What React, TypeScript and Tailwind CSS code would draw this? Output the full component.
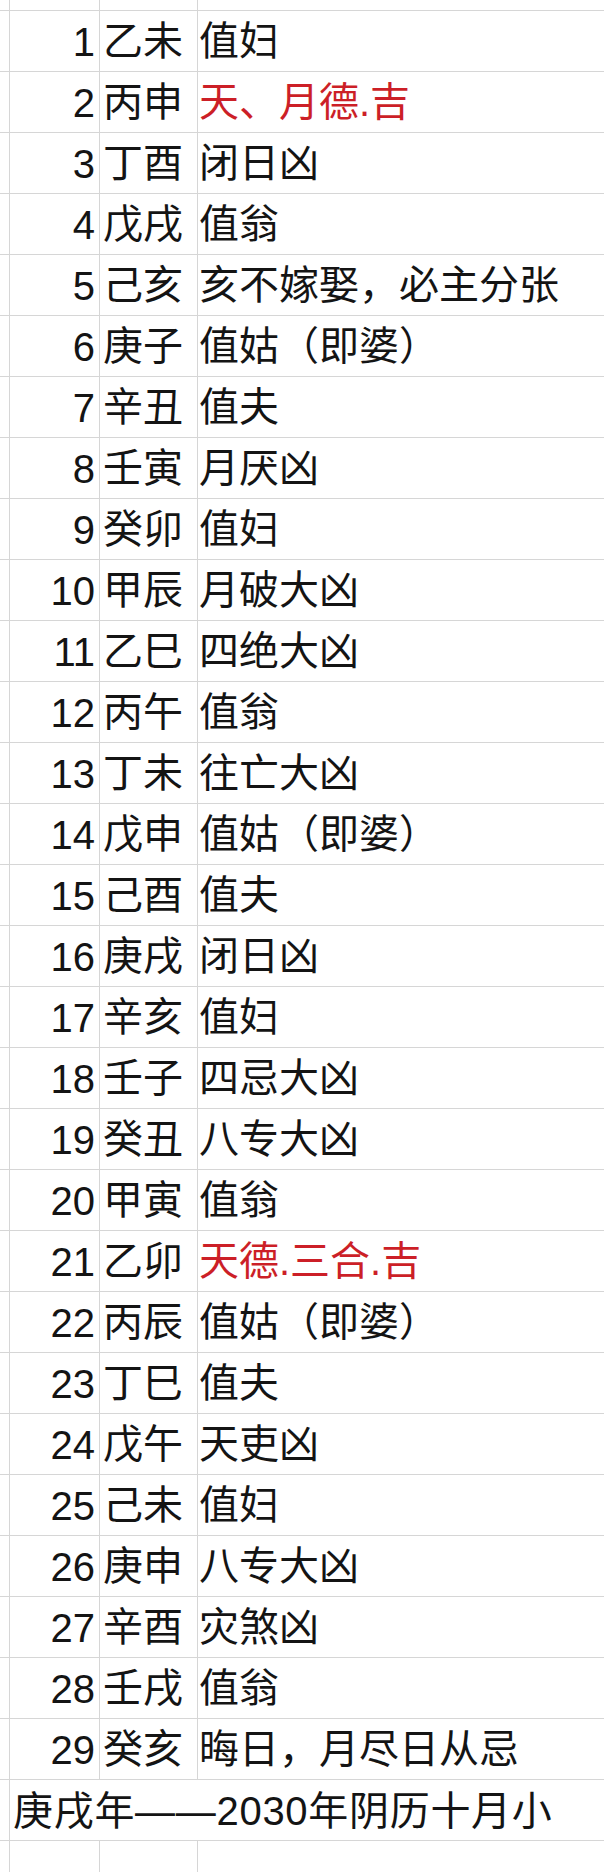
// 2030 庚戌年 阴历十月 — 日期表格

const ROWS: { n: number; gz: string; note: string; red?: boolean }[] = [
  { n: 1, gz: "乙未", note: "值妇" },
  { n: 2, gz: "丙申", note: "天、月德.吉", red: true },
  { n: 3, gz: "丁酉", note: "闭日凶" },
  { n: 4, gz: "戊戌", note: "值翁" },
  { n: 5, gz: "己亥", note: "亥不嫁娶，必主分张" },
  { n: 6, gz: "庚子", note: "值姑（即婆）" },
  { n: 7, gz: "辛丑", note: "值夫" },
  { n: 8, gz: "壬寅", note: "月厌凶" },
  { n: 9, gz: "癸卯", note: "值妇" },
  { n: 10, gz: "甲辰", note: "月破大凶" },
  { n: 11, gz: "乙巳", note: "四绝大凶" },
  { n: 12, gz: "丙午", note: "值翁" },
  { n: 13, gz: "丁未", note: "往亡大凶" },
  { n: 14, gz: "戊申", note: "值姑（即婆）" },
  { n: 15, gz: "己酉", note: "值夫" },
  { n: 16, gz: "庚戌", note: "闭日凶" },
  { n: 17, gz: "辛亥", note: "值妇" },
  { n: 18, gz: "壬子", note: "四忌大凶" },
  { n: 19, gz: "癸丑", note: "八专大凶" },
  { n: 20, gz: "甲寅", note: "值翁" },
  { n: 21, gz: "乙卯", note: "天德.三合.吉", red: true },
  { n: 22, gz: "丙辰", note: "值姑（即婆）" },
  { n: 23, gz: "丁巳", note: "值夫" },
  { n: 24, gz: "戊午", note: "天吏凶" },
  { n: 25, gz: "己未", note: "值妇" },
  { n: 26, gz: "庚申", note: "八专大凶" },
  { n: 27, gz: "辛酉", note: "灾煞凶" },
  { n: 28, gz: "壬戌", note: "值翁" },
  { n: 29, gz: "癸亥", note: "晦日，月尽日从忌" },
];

const line = "border-[#d6d6d6]";

function EmptyRow({ h }: { h: string }) {
  return (
    <div className={`flex ${h} border-b ${line}`}>
      <div className={`w-[10px] shrink-0 border-r ${line}`} />
      <div className={`w-[90px] shrink-0 border-r ${line}`} />
      <div className={`w-[98px] shrink-0 border-r ${line}`} />
      <div className="flex-1" />
    </div>
  );
}

export default function App() {
  return (
    <div
      className="w-[604px] h-[1872px] overflow-hidden bg-white text-[#141414] text-[40px] leading-none"
      style={{ fontFamily: '"Liberation Sans", "Noto Sans CJK SC", sans-serif' }}
    >
      <EmptyRow h="h-[11px]" />
      {ROWS.map((r) => (
        <div key={r.n} className={`flex h-[61px] border-b ${line}`}>
          <div className={`w-[10px] shrink-0 border-r ${line}`} />
          <div className={`w-[90px] shrink-0 border-r ${line} flex items-center justify-end pr-[4px] pt-[2px]`}>
            {r.n}
          </div>
          <div className={`w-[98px] shrink-0 border-r ${line} flex items-center pl-[3px] whitespace-nowrap`}>
            {r.gz}
          </div>
          <div
            className={`flex-1 flex items-center pl-[1px] whitespace-nowrap ${r.red ? "text-[#cc1f27]" : ""}`}
          >
            {r.note}
          </div>
        </div>
      ))}
      <div className={`flex h-[61px] border-b ${line}`}>
        <div className={`w-[10px] shrink-0 border-r ${line}`} />
        <div className="flex-1 flex items-center pl-[3px] pt-[1px] whitespace-nowrap tracking-[0.7px]">
          庚戌年——2030年阴历十月小
        </div>
      </div>
      <EmptyRow h="h-[40px]" />
    </div>
  );
}
